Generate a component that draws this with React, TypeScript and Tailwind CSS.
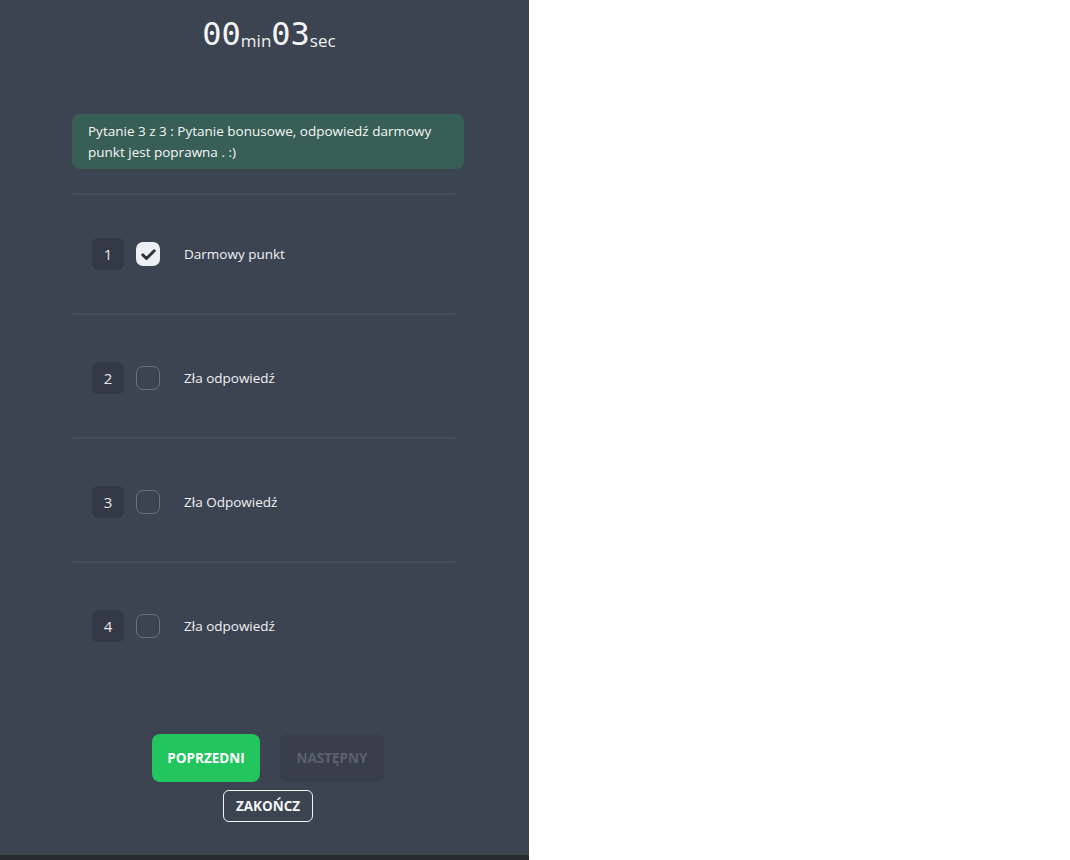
import React from "react";

const answers = [
  { n: 1, label: "Darmowy punkt", checked: true },
  { n: 2, label: "Zła odpowiedź", checked: false },
  { n: 3, label: "Zła Odpowiedź", checked: false },
  { n: 4, label: "Zła odpowiedź", checked: false },
];

const font = { fontFamily: '"Open Sans", "Noto Sans", sans-serif' };
const mono = { fontFamily: '"DejaVu Sans Mono", monospace' };

export default function App() {
  return (
    <div className="w-[1070px] h-[860px] bg-white" style={font}>
      <div className="w-[529px] h-[855px] bg-[#3d4451] text-[#eef0f3]">
        <div className="ml-[72px] w-[392px] flex flex-col">
          <div className="pt-[16px] flex justify-center">
            <div className="flex items-baseline h-[36px] ml-[2px]">
              <span className="text-[32px] leading-[36px] text-[#f3f4f6]" style={mono}>00</span>
              <span className="relative top-[2px] text-[17px] leading-[18px]">min</span>
              <span className="text-[32px] leading-[36px] text-[#f3f4f6]" style={mono}>03</span>
              <span className="relative top-[2px] text-[17px] leading-[18px]">sec</span>
            </div>
          </div>
          <div className="mt-[62px] h-[55px] rounded-lg bg-[#375f55] px-4 pt-[7px] text-[13.5px] leading-[21px] text-[#f5f5f5]">
            <span className="whitespace-nowrap">Pytanie 3 z 3 : Pytanie bonusowe, odpowiedź darmowy</span>
            <br />
            punkt jest poprawna . :)
          </div>
          <div className="mt-[24px] w-[384px] h-[2px] rounded-full bg-[#474e5b]" />
          {answers.map((a, i) => (
            <div key={a.n} className="w-[384px]">
              <div className={`${i === 0 ? "pt-[43px]" : "pt-[47px]"} ${i < answers.length - 1 ? "pb-[43px]" : ""} pl-[20px] flex items-center`}>
                <div className="w-8 h-8 rounded-md bg-[#333945] flex items-center justify-center text-[15px] text-[#e5e7eb]">
                  {a.n}
                </div>
                <div
                  className={`ml-3 w-6 h-6 rounded-[7px] flex items-center justify-center ${
                    a.checked ? "bg-[#eceff4]" : "border border-[#6c727e]"
                  }`}
                >
                  {a.checked && (
                    <svg width="17" height="17" viewBox="0 0 16 16" fill="none">
                      <path d="M2.6 8.4 L6.1 11.8 L13.4 4.5" stroke="#2f3541" strokeWidth="2.8" strokeLinecap="round" strokeLinejoin="round" />
                    </svg>
                  )}
                </div>
                <span className="ml-6 text-[13.5px] text-[#eef0f3]">{a.label}</span>
              </div>
              {i < answers.length - 1 && <div className="h-[2px] rounded-full bg-[#474e5b]" />}
            </div>
          ))}
          <div className="mt-[92px] flex justify-center gap-5">
            <button className="w-[108px] h-12 rounded-lg bg-[#22c55e] text-white text-[13.5px] font-bold">POPRZEDNI</button>
            <button className="w-[104px] h-12 rounded-lg bg-[#383e4a] text-[#5c626e] text-[13.5px] font-bold">NASTĘPNY</button>
          </div>
          <div className="mt-2 flex justify-center">
            <button className="w-[90px] h-8 rounded-md border border-[#f3f4f6] text-[#f3f4f6] text-[13.5px] font-bold">ZAKOŃCZ</button>
          </div>
        </div>
      </div>
      <div className="w-[529px] h-[5px] bg-[#2a2b2e]" />
    </div>
  );
}
